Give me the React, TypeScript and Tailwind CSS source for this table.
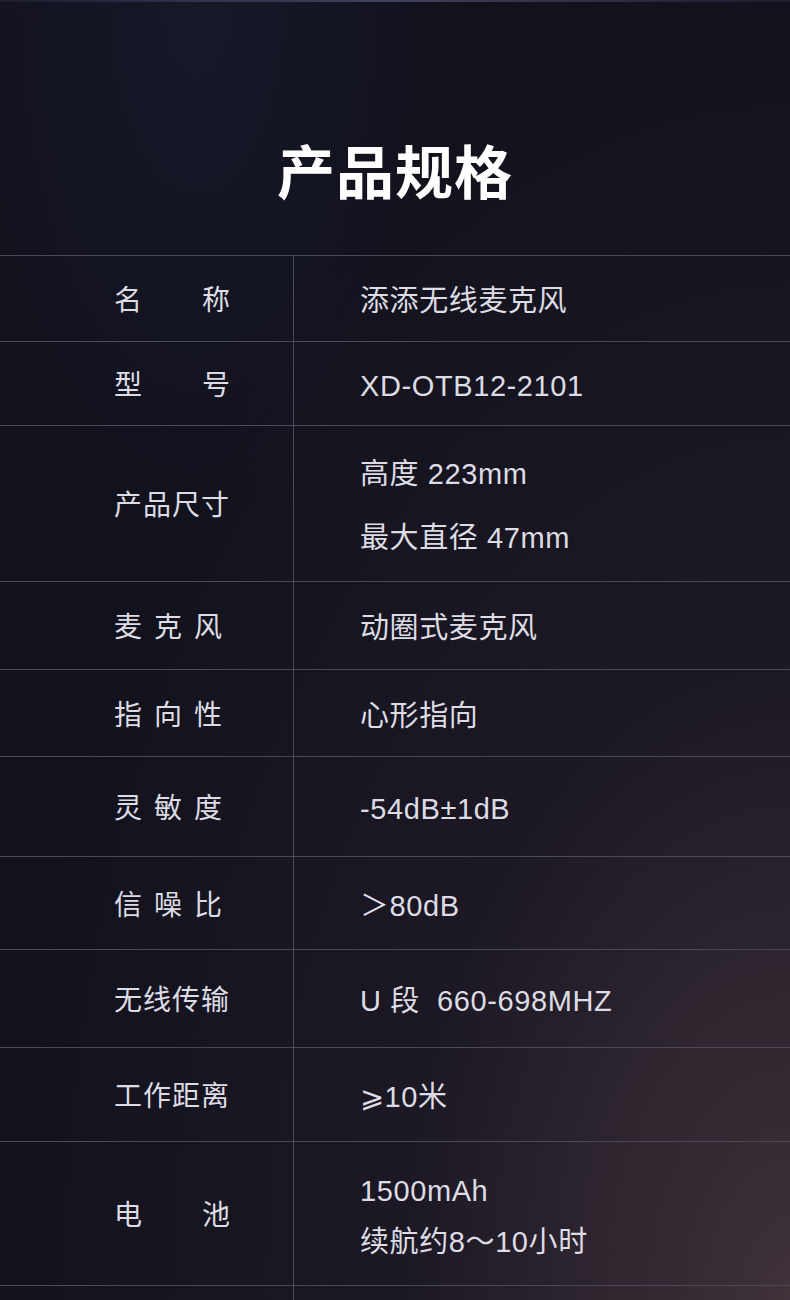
const font = { fontFamily: '"Liberation Sans", "Noto Sans CJK SC", sans-serif' };

type Spec = {
  label: string;
  kind: "two" | "three" | "four";
  values: string[];
  height: string;
  gap?: string;
};

const specs: Spec[] = [
  { label: "名称", kind: "two", values: ["添添无线麦克风"], height: "h-[86px]" },
  { label: "型号", kind: "two", values: ["XD-OTB12-2101"], height: "h-[84px]" },
  { label: "产品尺寸", kind: "four", values: ["高度 223mm", "最大直径 47mm"], height: "h-[156px]", gap: "gap-[30px]" },
  { label: "麦克风", kind: "three", values: ["动圈式麦克风"], height: "h-[88px]" },
  { label: "指向性", kind: "three", values: ["心形指向"], height: "h-[87px]" },
  { label: "灵敏度", kind: "three", values: ["-54dB±1dB"], height: "h-[100px]" },
  { label: "信噪比", kind: "three", values: ["＞80dB"], height: "h-[93px]" },
  { label: "无线传输", kind: "four", values: ["U 段  660-698MHZ"], height: "h-[98px]" },
  { label: "工作距离", kind: "four", values: ["⩾10米"], height: "h-[94px]" },
  { label: "电池", kind: "two", values: ["1500mAh", "续航约8～10小时"], height: "h-[144px]", gap: "gap-[17px]" },
];

function Label({ text, kind }: { text: string; kind: Spec["kind"] }) {
  if (kind === "two") {
    return (
      <div className="flex w-[116px] justify-between">
        {text.split("").map((c) => (
          <span key={c}>{c}</span>
        ))}
      </div>
    );
  }
  if (kind === "three") {
    return <div className="tracking-[12px]">{text}</div>;
  }
  return <div className="tracking-[1px]">{text}</div>;
}

function SpecRow({ spec }: { spec: Spec }) {
  return (
    <div className={`flex border-b border-[#4a4957] pt-[5px] ${spec.height}`}>
      <div className="-mt-[5px] flex w-[294px] shrink-0 items-center border-r border-[#4a4957] pt-[5px] pl-[114px] text-[28px]">
        <Label text={spec.label} kind={spec.kind} />
      </div>
      <div className={`flex flex-col justify-center pl-[66px] text-[29px] tracking-[0.6px] whitespace-pre ${spec.gap ?? ""}`}>
        {spec.values.map((v) => (
          <div key={v} className="leading-[34px]">
            {v}
          </div>
        ))}
      </div>
    </div>
  );
}

export default function App() {
  return (
    <div
      className="relative h-[1300px] w-[790px] overflow-hidden bg-[#12121d] text-[#dddce4]"
      style={font}
    >
      <div className="pointer-events-none absolute inset-0 bg-[radial-gradient(ellipse_at_100%_100%,rgba(78,60,66,0.75)_0%,rgba(40,32,44,0.45)_35%,rgba(18,18,29,0)_70%)]" />
      <div className="pointer-events-none absolute inset-0 bg-[radial-gradient(ellipse_at_25%_0%,rgba(35,45,80,0.22)_0%,rgba(18,18,29,0)_28%)]" />
      <div className="pointer-events-none absolute inset-x-0 top-0 h-[2px] bg-[linear-gradient(90deg,rgba(70,70,110,0.2),rgba(110,110,160,0.5),rgba(70,70,110,0.2))]" />

      <div className="relative">
        <div className="flex h-[256px] items-center justify-center border-b border-[#4a4957] pt-[84px]">
          <h1 className="text-[58px] font-bold tracking-[1px] text-white" style={{ fontFamily: '"Noto Sans CJK SC", sans-serif' }}>
            产品规格
          </h1>
        </div>
        {specs.map((s) => (
          <SpecRow key={s.label} spec={s} />
        ))}
        <div className="flex h-[40px]">
          <div className="w-[294px] shrink-0 border-r border-[#4a4957]" />
        </div>
      </div>
    </div>
  );
}
